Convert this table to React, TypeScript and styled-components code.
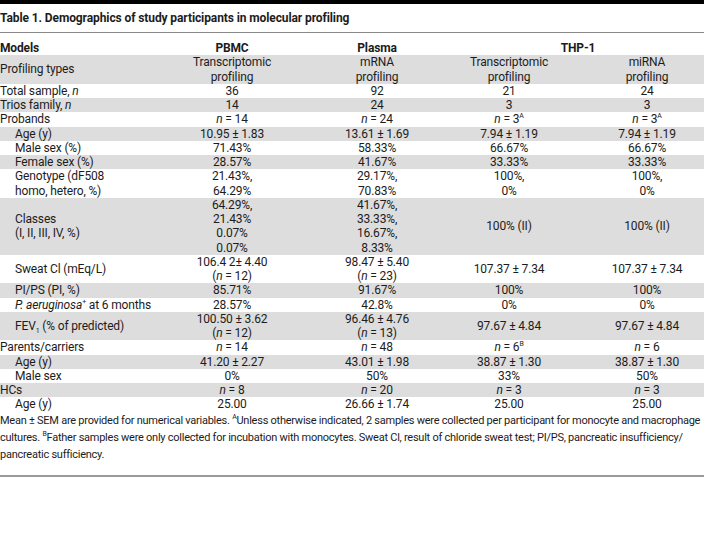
import React from "react";
import styled, { createGlobalStyle } from "styled-components";

const Global = createGlobalStyle`
  html, body { margin: 0; padding: 0; background: #fff; }
  body { font-family: Roboto, "Liberation Sans", sans-serif; color: #1c1c1c; }
`;

const Page = styled.div`
  width: 704px;
  display: flex;
  flex-direction: column;
`;

const TopBar = styled.div`
  height: 4px;
  background: #000;
`;

const Title = styled.h1`
  margin: 0;
  padding: 7px 0 6px 0;
  font-size: 12px;
  line-height: 15px;
  font-weight: 700;
  letter-spacing: -0.1px;
  border-bottom: 1px solid #8a8a8a;
`;

const Table = styled.div`
  display: flex;
  flex-direction: column;
  padding-top: 8px;
  font-size: 12px;
  line-height: 14.25px;
  letter-spacing: -0.15px;
`;

const Row = styled.div<{ $shade?: boolean }>`
  display: grid;
  grid-template-columns: 152px 160px 130px 134px 128px;
  align-items: center;
  background: ${(p) => (p.$shade ? "#dddddd" : "transparent")};
  & > :nth-child(5) {
    padding-left: 14px;
  }
`;

const Label = styled.div<{ $indent?: boolean; $bold?: boolean }>`
  padding-left: ${(p) => (p.$indent ? "15px" : "0")};
  font-weight: ${(p) => (p.$bold ? 700 : 400)};
  white-space: nowrap;
`;

const Cell = styled.div<{ $span?: number; $bold?: boolean }>`
  text-align: center;
  grid-column: span ${(p) => p.$span ?? 1};
  padding-left: ${(p) => ((p.$span ?? 1) > 1 ? "10px" : "0")};
  font-weight: ${(p) => (p.$bold ? 700 : 400)};
  white-space: nowrap;
`;

const I = styled.i`
  font-style: italic;
`;

const Sup = styled.sup`
  font-size: 7px;
  line-height: 0;
  vertical-align: 5px;
`;

const Sub = styled.sub`
  font-size: 7px;
  line-height: 0;
  vertical-align: -3px;
`;

const Notes = styled.p`
  margin: 0;
  padding: 0 0 12px 0;
  font-size: 11px;
  line-height: 17px;
  letter-spacing: -0.25px;
  white-space: nowrap;
  border-bottom: 2px solid #9a9a9a;
`;

type R = {
  label: React.ReactNode;
  indent?: boolean;
  shade?: boolean;
  cells: React.ReactNode[];
};

const lines = (...xs: React.ReactNode[]) =>
  xs.map((x, i) => (
    <React.Fragment key={i}>
      {i > 0 && <br />}
      {x}
    </React.Fragment>
  ));

const n = (v: React.ReactNode) => (
  <>
    <I>n</I> = {v}
  </>
);

const rows: R[] = [
  {
    label: "Profiling types",
    shade: true,
    cells: [
      lines("Transcriptomic", "profiling"),
      lines("mRNA", "profiling"),
      lines("Transcriptomic", "profiling"),
      lines("miRNA", "profiling"),
    ],
  },
  { label: <>Total sample, <I>n</I></>, cells: ["36", "92", "21", "24"] },
  { label: <>Trios family, <I>n</I></>, shade: true, cells: ["14", "24", "3", "3"] },
  {
    label: "Probands",
    cells: [n(14), n(24), n(<>3<Sup>A</Sup></>), n(<>3<Sup>A</Sup></>)],
  },
  { label: "Age (y)", indent: true, shade: true, cells: ["10.95 ± 1.83", "13.61 ± 1.69", "7.94 ± 1.19", "7.94 ± 1.19"] },
  { label: "Male sex (%)", indent: true, cells: ["71.43%", "58.33%", "66.67%", "66.67%"] },
  { label: "Female sex (%)", indent: true, shade: true, cells: ["28.57%", "41.67%", "33.33%", "33.33%"] },
  {
    label: lines("Genotype (dF508", "homo, hetero, %)"),
    indent: true,
    cells: [lines("21.43%,", "64.29%"), lines("29.17%,", "70.83%"), lines("100%,", "0%"), lines("100%,", "0%")],
  },
  {
    label: lines("Classes", "(I, II, III, IV, %)"),
    indent: true,
    shade: true,
    cells: [
      lines("64.29%,", "21.43%", "0.07%", "0.07%"),
      lines("41.67%,", "33.33%,", "16.67%,", "8.33%"),
      "100% (II)",
      "100% (II)",
    ],
  },
  {
    label: "Sweat Cl (mEq/L)",
    indent: true,
    cells: [
      lines("106.4 2± 4.40", <>({n(12)})</>),
      lines("98.47 ± 5.40", <>({n(23)})</>),
      "107.37 ± 7.34",
      "107.37 ± 7.34",
    ],
  },
  { label: "PI/PS (PI, %)", indent: true, shade: true, cells: ["85.71%", "91.67%", "100%", "100%"] },
  {
    label: (
      <>
        <I>P. aeruginosa</I>
        <Sup>+</Sup> at 6 months
      </>
    ),
    indent: true,
    cells: ["28.57%", "42.8%", "0%", "0%"],
  },
  {
    label: (
      <>
        FEV<Sub>1</Sub> (% of predicted)
      </>
    ),
    indent: true,
    shade: true,
    cells: [
      lines("100.50 ± 3.62", <>({n(12)})</>),
      lines("96.46 ± 4.76", <>({n(13)})</>),
      "97.67 ± 4.84",
      "97.67 ± 4.84",
    ],
  },
  { label: "Parents/carriers", cells: [n(14), n(48), n(<>6<Sup>B</Sup></>), n(6)] },
  { label: "Age (y)", indent: true, shade: true, cells: ["41.20 ± 2.27", "43.01 ± 1.98", "38.87 ± 1.30", "38.87 ± 1.30"] },
  { label: "Male sex", indent: true, cells: ["0%", "50%", "33%", "50%"] },
  { label: "HCs", shade: true, cells: [n(8), n(20), n(3), n(3)] },
  { label: "Age (y)", indent: true, cells: ["25.00", "26.66 ± 1.74", "25.00", "25.00"] },
];

export default function App() {
  return (
    <Page>
      <Global />
      <TopBar />
      <Title>Table 1. Demographics of study participants in molecular profiling</Title>
      <Table>
        <Row>
          <Label $bold>Models</Label>
          <Cell $bold>PBMC</Cell>
          <Cell $bold>Plasma</Cell>
          <Cell $bold $span={2}>THP-1</Cell>
        </Row>
        {rows.map((r, i) => (
          <Row key={i} $shade={r.shade}>
            <Label $indent={r.indent}>{r.label}</Label>
            {r.cells.map((c, j) => (
              <Cell key={j}>{c}</Cell>
            ))}
          </Row>
        ))}
      </Table>
      <Notes>
        Mean ± SEM are provided for numerical variables. <Sup>A</Sup>Unless otherwise indicated, 2 samples were
        collected per participant for monocyte and macrophage
        <br />
        cultures. <Sup>B</Sup>Father samples were only collected for incubation with monocytes. Sweat Cl, result of
        chloride sweat test; PI/PS, pancreatic insufficiency/
        <br />
        pancreatic sufficiency.
      </Notes>
    </Page>
  );
}
